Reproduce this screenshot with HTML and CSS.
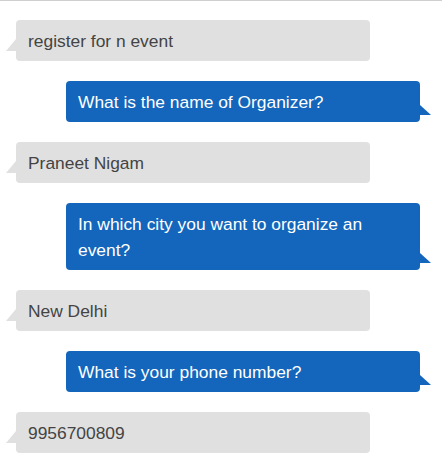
FILE: index.html
```html
<!DOCTYPE html>
<html lang="en">
<head>
    <meta charset="UTF-8">
    <meta name="viewport" content="width=device-width, initial-scale=1.0">
    <title>Event Registration Chat</title>
    <link rel="stylesheet" href="styles.css">
</head>
<body>
    <div id="chat">
        <div class="msg user">register for n event</div>
        <div class="msg bot">What is the name of Organizer?</div>
        <div class="msg user">Praneet Nigam</div>
        <div class="msg bot">In which city you want to organize an event?</div>
        <div class="msg user">New Delhi</div>
        <div class="msg bot">What is your phone number?</div>
        <div class="msg user">9956700809</div>
    </div>
</body>
</html>
```

FILE: styles.css
```css
* {
    margin: 0;
    padding: 0;
    box-sizing: border-box;
}
body {
    font-family: "Liberation Sans", Arial, sans-serif;
    background-color: #ffffff;
    color: #444;
}
#chat {
    border-top: 1px solid #cfcfcf;
    padding: 19px 22px 20px 16px;
    display: flex;
    flex-direction: column;
    gap: 20px;
}
.msg {
    position: relative;
    width: 354px;
    padding: 7.5px 12px;
    font-size: 17.4px;
    line-height: 26px;
    border-radius: 4px;
}
.msg::after {
    content: "";
    position: absolute;
    width: 0;
    height: 0;
    border-style: solid;
}
.user {
    align-self: flex-start;
    background-color: #e0e0e0;
    color: #444;
}
.user::after {
    left: -10px;
    bottom: 10px;
    border-width: 0 0 12px 10px;
    border-color: transparent transparent #e0e0e0 transparent;
}
.bot {
    align-self: flex-end;
    background-color: #1366bb;
    color: #ffffff;
}
.bot::after {
    right: -11px;
    bottom: 7px;
    border-width: 0 11px 10px 0;
    border-color: transparent transparent #1366bb transparent;
}
```
